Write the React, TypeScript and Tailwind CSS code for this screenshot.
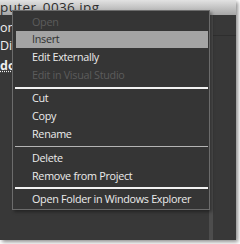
import React from 'react';

type Entry =
  | { kind: 'item'; label: string; disabled?: boolean; active?: boolean }
  | { kind: 'sep'; tone: 'white' | 'gray'; top: string; bottom: string };

const entries: Entry[] = [
  { kind: 'item', label: 'Open', disabled: true },
  { kind: 'item', label: 'Insert', active: true },
  { kind: 'item', label: 'Edit Externally' },
  { kind: 'item', label: 'Edit in Visual Studio', disabled: true },
  { kind: 'sep', tone: 'white', top: 'mt-[2px]', bottom: 'mb-[1px]' },
  { kind: 'item', label: 'Cut' },
  { kind: 'item', label: 'Copy' },
  { kind: 'item', label: 'Rename' },
  { kind: 'sep', tone: 'gray', top: 'mt-[3px]', bottom: 'mb-[2px]' },
  { kind: 'item', label: 'Delete' },
  { kind: 'item', label: 'Remove from Project' },
  { kind: 'sep', tone: 'white', top: 'mt-[2px]', bottom: 'mb-[1px]' },
  { kind: 'item', label: 'Open Folder in Windows Explorer' },
];

function ContextMenu() {
  return (
    <div className="absolute left-[12px] top-[10px] w-[198px] h-[200px] border border-[#6c6c6c] bg-[#353535] pt-[2px] pb-[1px] flex flex-col shadow-[2px_2px_3px_rgba(0,0,0,0.35)]">
      {entries.map((e, i) => {
        if (e.kind === 'sep') {
          return (
            <div
              key={i}
              className={`${e.top} ${e.bottom} ml-[2px] mr-[1px] ${e.tone === 'white' ? 'h-[2px] bg-[#f2f2f2]' : 'h-[1px] bg-[#b4b4b4]'}`}
            />
          );
        }
        let tone = 'text-[#ececec]';
        if (e.active) tone = 'bg-[#a4a4a4] text-[#303030]';
        if (e.disabled) tone = 'text-[#5c5c5c]';
        return (
          <div key={i} className="h-[18px] flex items-center">
            <div
              className={`h-[17px] flex-1 ml-[3px] mr-[1px] pl-[16px] flex items-center text-[10.8px] tracking-[-0.3px] leading-none whitespace-nowrap ${tone}`}
            >
              {e.label}
            </div>
          </div>
        );
      })}
    </div>
  );
}

export default function App() {
  return (
    <div
      className="relative w-[240px] h-[244px] bg-white overflow-hidden"
      style={{ fontFamily: '"Open Sans", "Noto Sans", sans-serif' }}
    >
      <div className="w-[236px] h-[240px] bg-[#383838] flex flex-col shadow-[2px_2px_4px_rgba(0,0,0,0.45)]">
        {/* title strip */}
        <div className="h-[15px] bg-gradient-to-b from-[#e2e2e2] to-[#a6a6a6] text-[#2c2c2c] text-[13.5px] leading-[14px] tracking-[0.4px] whitespace-nowrap overflow-hidden">
          puter_0036.jpg
        </div>
        <div className="flex-1 flex">
          <div className="flex-1 flex flex-col text-[12.5px] text-[#f0f0f0] leading-[14px] overflow-hidden">
            <div className="mt-[6px]">om</div>
            <div className="mt-[4px]">Dis</div>
            <div className="mt-[6px] font-bold underline decoration-dotted">do</div>
          </div>
          <div className="w-[27px] flex">
            <div className="w-[4px] bg-[#4d4d4d]" />
            <div className="flex-1 flex flex-col">
              <div className="h-[20px]" />
              <div className="h-[1px] bg-[#2e2e2e]" />
            </div>
          </div>
        </div>
      </div>
      <ContextMenu />
    </div>
  );
}
